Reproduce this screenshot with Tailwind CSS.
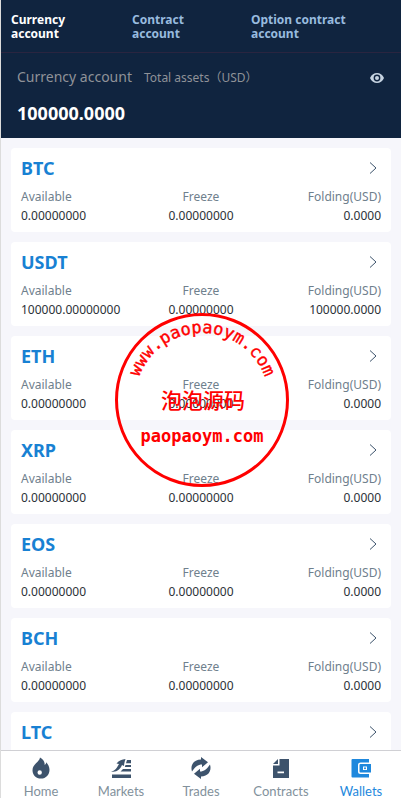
<!DOCTYPE html>
<html lang="en">
<head>
    <meta charset="UTF-8">
    <meta name="viewport" content="width=device-width, initial-scale=1.0">
    <title>Wallets</title>
    <script src="https://cdn.jsdelivr.net/npm/@tailwindcss/browser@4"></script>
</head>
<body class="bg-[#f6f6fb] font-['Noto_Sans','Noto_Sans_CJK_SC',sans-serif]">
<div class="relative flex flex-col h-screen border-l border-[#dcdcdc] overflow-hidden">
    <!-- Header -->
    <header class="bg-[#10243f] shrink-0">
        <div class="grid grid-cols-[121px_119px_1fr] items-start pl-[10px] pt-[13px] pb-[11px] border-b border-[#2a2540] text-xs leading-[14px] font-bold text-[#98bbdf]">
            <button class="max-w-24 text-left text-white">Currency account</button>
            <button class="max-w-24 text-left">Contract account</button>
            <button class="max-w-28 text-left">Option contract account</button>
        </div>
        <div class="px-4 pt-3 pb-[13px]">
            <div class="flex items-center justify-between">
                <p class="flex items-baseline gap-3 text-sm leading-6 text-[#8f9298]">
                    Currency account
                    <span class="text-xs leading-6">Total assets（USD）</span>
                </p>
                <button aria-label="Hide assets">
                    <svg class="w-4 h-4 text-[#c6d3e1]" viewBox="0 0 16 16" fill="none">
                        <path d="M1 8C2.5 4.700 5 3 8 3S13.500 4.700 15 8c-1.500 3.300-4 5-7 5S2.500 11.300 1 8z" fill="currentColor"/>
                        <circle cx="8" cy="8" r="3.400" fill="#10243f"/>
                        <circle cx="8" cy="8" r="2" fill="currentColor"/>
                    </svg>
                </button>
            </div>
            <p class="mt-[11px] text-lg leading-6 font-bold text-white">100000.0000</p>
        </div>
    </header>

    <!-- Accounts -->
    <main id="accounts" class="flex-1 min-h-0 overflow-y-auto [scrollbar-width:none] p-[10px] flex flex-col gap-[10px]"></main>

    <!-- Bottom bar -->
    <nav class="grid grid-cols-5 shrink-0 h-12 pt-[5px] bg-white border-t border-[#d0d0d4] font-[Lato,sans-serif] text-[13px] leading-4 text-[#82919c]">
        <a href="#home" class="flex flex-col items-center gap-[3px]">
            <svg class="w-6 h-6 shrink-0" viewBox="0 0 24 24" fill="#3d536c">
                <path fill-rule="evenodd" d="M11 1.500c3 2 5 4 4.600 7.500.900-.500 1.500-1.500 1.600-2.800 2 2.300 3.300 4.800 3.300 7.500 0 5-3.500 8.800-8.500 8.800s-8.500-3.500-8.500-8.300c0-3.200 1.700-5.200 3.500-7C8.800 5.400 10.700 4 11 1.500zM10.700 14.300a2.200 2.200 0 1 0 0 4.400 2.200 2.200 0 0 0 0-4.400z"/>
            </svg>
            Home
        </a>
        <a href="#markets" class="flex flex-col items-center gap-[3px]">
            <svg class="w-6 h-6 shrink-0" viewBox="0 0 24 24" fill="#3d536c">
                <path d="M2 15.500c4-.500 5.500-3 8-7.500L7.500 7.500C10 4.500 13 3.500 16.500 3c-.800 2.500-1.400 4.500-1.500 7l-2-1C11 13.500 8 16.500 2 15.500z"/>
                <path d="M18 4h4v3.200h-5zM16.500 9H22v2h-6.200zM14 13h8v2.500H11.500zM3 18.500h19V22H3z"/>
            </svg>
            Markets
        </a>
        <a href="#trades" class="flex flex-col items-center gap-[3px]">
            <svg class="w-6 h-6 shrink-0" viewBox="0 0 24 24" fill="#3d536c">
                <path d="M3 15.500C.800 8.500 5.500 3.500 12 3.500V1l7 5.200-6 5V8.500C9 8.500 6 11 3 15.500z"/>
                <path d="M21 8.500c2.200 7-2.500 12-9 12V23l-7-5.200 6-5v2.700c4 0 7-2.500 10-7z"/>
            </svg>
            Trades
        </a>
        <a href="#contracts" class="flex flex-col items-center gap-[3px]">
            <svg class="w-6 h-6 shrink-0" viewBox="0 0 24 24" fill="#3d536c">
                <path fill-rule="evenodd" d="M10.500 3H20v19H4V9.500h6.500zM8.500 15.500v1.700h6.500v-1.700z"/>
                <path d="M9 3v5H4z"/>
            </svg>
            Contracts
        </a>
        <a href="#wallets" class="flex flex-col items-center gap-[3px] text-[#1e88dd]">
            <svg class="w-6 h-6 shrink-0" viewBox="0 0 24 24" fill="currentColor">
                <path d="M3.500 3H20v3.500h-8.500A2.500 2.500 0 0 0 9 9v6.500a2.500 2.500 0 0 0 2.500 2.500H20v3.500H3.500a1 1 0 0 1-1-1V4a1 1 0 0 1 1-1z"/>
                <path fill-rule="evenodd" d="M11.500 8H22v8.500H11.500a1 1 0 0 1-1-1V9a1 1 0 0 1 1-1zM14 10.500V14h4v-3.500z"/>
                <circle cx="16" cy="12.300" r="1"/>
            </svg>
            Wallets
        </a>
    </nav>

    <!-- Stamp -->
    <svg class="absolute top-[312px] left-1/2 -translate-x-1/2 w-44 h-44 pointer-events-none" viewBox="0 0 176 176" fill="#f00">
        <circle cx="89" cy="88" r="85.500" fill="none" stroke="#f00" stroke-width="3"/>
        <path id="arc" d="M22 88a67 67 0 0 1 134 0" fill="none"/>
        <text class="font-['DejaVu_Sans_Mono',monospace] text-[17px]" stroke="#f00" stroke-width="0.400" text-anchor="middle">
            <textPath href="#arc" startOffset="50%">www.paopaoym.com</textPath>
        </text>
        <text x="90" y="96" text-anchor="middle" class="font-['Noto_Sans_CJK_SC',sans-serif] text-[21px] font-medium">泡泡源码</text>
        <text x="89" y="130" text-anchor="middle" class="font-['DejaVu_Sans_Mono',monospace] text-[17px] font-bold">paopaoym.com</text>
    </svg>
</div>

    <script>
        const accounts = [
            { name: 'BTC', available: '0.00000000', freeze: '0.00000000', folding: '0.0000' },
            { name: 'USDT', available: '100000.00000000', freeze: '0.00000000', folding: '100000.0000' },
            { name: 'ETH', available: '0.00000000', freeze: '0.00000000', folding: '0.0000' },
            { name: 'XRP', available: '0.00000000', freeze: '0.00000000', folding: '0.0000' },
            { name: 'EOS', available: '0.00000000', freeze: '0.00000000', folding: '0.0000' },
            { name: 'BCH', available: '0.00000000', freeze: '0.00000000', folding: '0.0000' },
            { name: 'LTC', available: '0.00000000', freeze: '0.00000000', folding: '0.0000' },
        ];

        // Render one card per account
        document.getElementById('accounts').innerHTML = accounts.map(a => `
            <a href="#${a.name}" class="block shrink-0 bg-white rounded px-[10px] pt-2 pb-[7px]">
                <div class="flex items-center justify-between pr-1">
                    <h2 class="text-lg leading-6 font-bold text-[#1881d3]">${a.name}</h2>
                    <svg class="w-2 h-3" viewBox="0 0 8 12" fill="none" stroke="#3d536c"><path d="M1 0.500L7 6L1 11.500"/></svg>
                </div>
                <dl class="mt-[7px] grid grid-cols-3 text-xs leading-[19px] text-[#2c3238]">
                    <div><dt class="text-[#6f808d]">Available</dt><dd>${a.available}</dd></div>
                    <div class="text-center"><dt class="text-[#6f808d]">Freeze</dt><dd>${a.freeze}</dd></div>
                    <div class="text-right"><dt class="text-[#6f808d]">Folding(USD)</dt><dd>${a.folding}</dd></div>
                </dl>
            </a>`).join('');
    </script>
</body>
</html>
